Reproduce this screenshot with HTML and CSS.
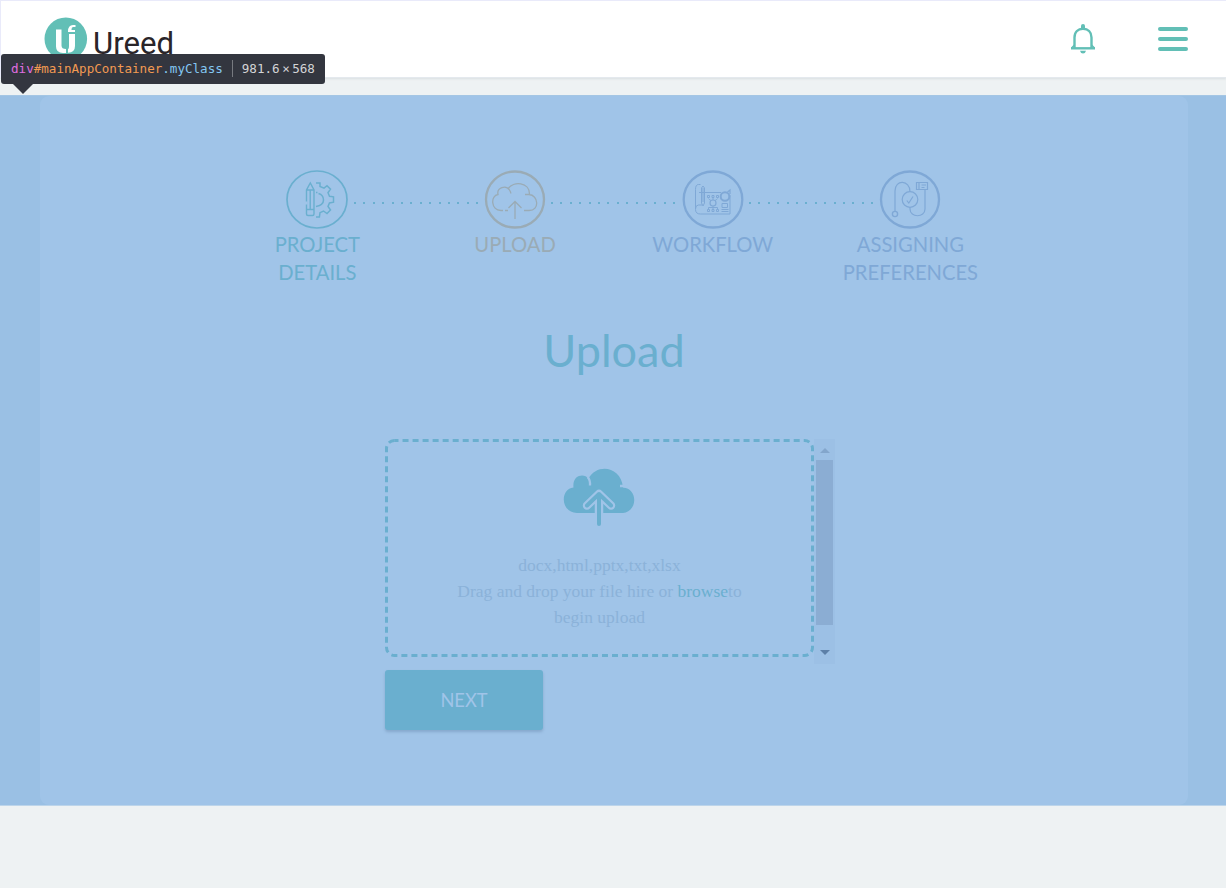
FILE: index.html
```html
<!DOCTYPE html>
<html lang="en">
<head>
<meta charset="utf-8">
<title>Ureed</title>
<link rel="stylesheet" href="styles.css">
</head>
<body>
<header class="header">
  <svg class="logo" width="140" height="48" viewBox="40 14 140 48">
    <circle cx="65.800" cy="38.800" r="21.300" fill="#62bfb6"/>
    <path d="M56 29.500h5.500v16q0 3.500 4.500 3.500v4h-3q-7 0-7-6.500z" fill="#fff"/>
    <path d="M69 34h6v12q0 6.500-7 6.800V49q1 0 1-3.500zM68 31.500q0-6.500 5-6.500h2.500v2H73q-1.500 0-1.500 2.500v.5H75v2h-7z" fill="#fff"/>
    <text class="logo-name" x="93" y="53.500" textLength="81" lengthAdjust="spacingAndGlyphs">Ureed</text>
  </svg>
  <nav class="actions">
    <svg width="26" height="32" viewBox="0 0 26 32" fill="none" stroke="#62bfb6">
      <path d="M1 25.300h24" stroke-width="2.400"/>
      <path d="M4.500 25V14.500C4.500 8.800 8 5.800 13 5.800s8.500 3 8.500 8.700V25" stroke-width="2.400"/>
      <path d="M1.500 25l3-3M24.500 25l-3-3" stroke-width="1.500"/>
      <path d="M13 3v2" stroke-width="4" stroke-linecap="round"/>
      <path d="M10 27.800h6q-.5 2.700-3 2.700t-3-2.700z" fill="#62bfb6" stroke="none"/>
    </svg>
    <div class="menu"><i></i><i></i><i></i></div>
  </nav>
</header>
<main class="main">
  <section class="card">
    <div class="steps">
      <div class="step done">
        <svg class="step-icon" width="64" height="60" viewBox="0 0 64 60">
          <ellipse cx="32" cy="29.500" rx="30" ry="28.500" stroke-width="1.700"/>
          <path d="M21.500 20v24q0 1.500 1.500 1.500h4.500q1.500 0 1.500-1.500V20l-3.700-7zM21.500 20h7.500M21.500 39.500h7.500M25.200 20v19" stroke-width="1.400"/>
          <path d="M31 13h4v3.500l4 1.700 3-2.500 3.500 3.500-2.500 3.500 1.500 3.500 4 .6v5.400l-4 .8-1.500 3.500 2.500 3.500-3.500 3.500-3.500-2.500-3.500 1.700-.6 4.300H31M31 22.500h1.500M33.500 23.500q5 1.500 5 6.500T31 36.500" stroke-width="1.500"/>
          <path d="M21 31.500v3" stroke="#a0c4e8" stroke-width="3"/>
        </svg>
        <span>PROJECT<br>DETAILS</span>
      </div>
      <div class="step current">
        <svg class="step-icon" width="64" height="60" viewBox="0 0 64 60">
          <ellipse cx="32" cy="29.500" rx="29" ry="28" stroke-width="2.300"/>
          <path d="M20 40.500h-2C7.500 40 7.500 25.500 15 24.500c-1.500-7 8-10 11.500-4.500 1 1.500 1.300 2 1.300 3.500M25 19c5-8.500 22-7 21.500 5.500M42 24.500h4c9.500.5 11 16 0 16h-5M22 40.500h3M32 49V32M25.500 38l6.500-6.500 6.500 6.500" stroke-width="1.300"/>
        </svg>
        <span>UPLOAD</span>
      </div>
      <div class="step">
        <svg class="step-icon" width="64" height="60" viewBox="0 0 64 60">
          <ellipse cx="32" cy="29.500" rx="29.300" ry="28" stroke-width="2.300"/>
          <path d="M19.500 14.500h-2q-3 0-3 5v20q0 4.500 5 4.500h29.500V25M14.500 39q0-4 3-4h3.500M20.500 18l1.500-2 1.500 2v15l-1.500 3-1.500-3zM18 22.500h22M22 18v14" stroke-width="1"/>
          <circle cx="44" cy="26.500" r="4.300" stroke-width="2"/>
          <path d="M46.500 22l2.500-2v4" stroke-width="1.200"/>
          <circle cx="32" cy="33" r="3" stroke-width="1.200"/>
          <path d="M26.500 25.500h2v2h-2zM31 25.500h2v2h-2zM35.500 25.500h2v2h-2zM26.500 39.500h2v2h-2zM31 39.500h2v2h-2zM35.500 39.500h2v2h-2zM32 28v2M32 36v3M27.500 28.500q1 1.500 2.500 2M36.500 28.500q-1 1.500-2.500 2M27.500 39v-1.500h9V39M41 33.500h5.500v4H41zM40.500 39.500h7M40.500 41.500h7" stroke-width="1"/>
        </svg>
        <span>WORKFLOW</span>
      </div>
      <div class="step">
        <svg class="step-icon" width="64" height="60" viewBox="0 0 64 60">
          <ellipse cx="32" cy="29.500" rx="29" ry="28" stroke-width="2.300"/>
          <circle cx="32" cy="29.500" r="7.800" stroke-width="1.200"/>
          <path d="M17 41V21c0-12 15-11 15 .7M32 37.300V39c0 9 15 9 15 0V20" stroke-width="1.200"/>
          <path d="M38.500 12.500h11v7h-11zM41 12.500v7M43.500 15h4.500M43.500 17.500h3" stroke-width="1.200"/>
          <circle cx="17" cy="44" r="2.600" stroke-width="1.400"/>
          <path d="M28.800 30.500l2 2.500 4.200-6.500" stroke-width="1.200"/>
        </svg>
        <span>ASSIGNING<br>PREFERENCES</span>
      </div>
    </div>
    <h1 class="title">Upload</h1>
    <div class="form">
      <div class="scroller">
        <div class="drop">
          <svg class="frame" width="429" height="218"><rect x="1.500" y="1.500" width="426" height="215" rx="8" fill="none" stroke="#6aafcf" stroke-width="3" stroke-dasharray="6 4.030" stroke-dashoffset="2"/></svg>
          <svg class="cloud" width="72" height="60" viewBox="0 0 72 60">
            <path d="M14 46C-3 45-3 22 10.500 20.500 9 8 21 6 25.500 11.500 34-4 58-1 60 20.500c15 1 15 24 0 25.500z" fill="#6aafcf"/>
            <path d="M24.500 10q3 3 2.500 8.500M67 19H57" fill="none" stroke="#a0c4e8" stroke-width="2.300"/>
            <path d="M36 57V27M24 38.500L36 27l12 11.500" fill="none" stroke="#a0c4e8" stroke-width="8.500" stroke-linecap="round" stroke-linejoin="round"/>
            <path d="M36 57V27M24 38.500L36 27l12 11.500" fill="none" stroke="#6aafcf" stroke-width="4" stroke-linecap="round" stroke-linejoin="round"/>
          </svg>
          <p class="hint">docx,html,pptx,txt,xlsx<br>Drag and drop your file hire or <a class="browse">browse</a>to<br>begin upload</p>
        </div>
        <div class="scrollbar"><i class="arrow up"></i><div class="thumb"></div><i class="arrow down"></i></div>
      </div>
      <button class="next">NEXT</button>
    </div>
  </section>
</main>
<div class="inspect"><span class="tag">div</span><span class="id">#mainAppContainer</span><span class="cls">.myClass</span><span class="size">981.6<span class="times">×</span>568</span></div>
</body>
</html>
```
FILE: styles.css
```css
* { box-sizing: border-box; }
body { margin: 0; height: 888px; background: #eef2f3; font-family: Lato, sans-serif; overflow: hidden; }
.header { display: flex; justify-content: space-between; align-items: flex-start; height: 78px; padding: 14px 38px 0 40px; background: #fff; border-top: 1px solid #e9eafa; border-left: 1px solid #e9eafa; border-bottom: 1px solid #e4e9ee; box-shadow: 0 1px 2px #d9dfe2; }
.logo { margin: -1px 0 0 -1px; }
.logo-name { font: 32px Roboto, sans-serif; fill: #2a2529; }
.actions { display: flex; gap: 62px; padding-top: 8px; }
.menu { display: flex; flex-direction: column; gap: 6px; padding-top: 4px; }
.menu i { width: 30px; height: 4px; border-radius: 2px; background: #62bfb6; }
.main { height: 711px; margin-top: 17px; padding: 0 38px 0 40px; background: #9ac0e4; border-top: 1px solid #a4c6e4; border-bottom: 1px solid #bdd5ea; }
.card { height: 709px; padding-top: 74px; border-radius: 9px; background: #a0c4e8; }
.steps { display: grid; grid-template-columns: repeat(4, 197.700px); width: 791px; margin-left: 178.500px; }
.step { position: relative; display: flex; flex-direction: column; align-items: center; height: 120px; color: #7fa8d6; font-size: 20.200px; line-height: 28px; text-align: center; }
.step-icon { fill: none; stroke: currentColor; }
.done { color: #6aafcf; }
.current { color: #9aabb5; }
.step:not(:last-child)::after { content: ""; position: absolute; left: 135px; top: 32px; width: 126px; height: 2px; background: repeating-linear-gradient(90deg, #6aafcf 0 2px, transparent 2px 9.400px); }
.title { margin: 32px 0 0; font-size: 45px; line-height: 56px; font-weight: 400; text-align: center; color: #6aafcf; }
.form { width: 450px; margin: 61px 0 0 345px; }
.scroller { display: flex; height: 225px; }
.drop { position: relative; width: 429px; height: 218px; padding-top: 28px; }
.frame { position: absolute; left: 0; top: 0; }
.cloud { display: block; margin: 0 0 0 178px; }
.hint { margin: 25px 0 0; font: 17.500px/26px "Liberation Serif", serif; text-align: center; color: #8bb2d9; }
.browse { color: #6aafcf; }
.scrollbar { display: flex; flex-direction: column; align-items: center; width: 21px; background: #9cc0e5; padding: 9px 0; }
.arrow { border: 5px solid transparent; border-top: 0; border-bottom: 5px solid #83a6cc; }
.down { border-top: 5px solid #5d80a8; border-bottom: 0; margin-top: 25px; }
.thumb { width: 17px; height: 165px; margin-top: 7px; background: #8badd3; }
.next { display: block; width: 158px; height: 60px; margin-top: 6px; border: 0; border-radius: 3px; background: #6aafcf; color: #a0c4e8; font: 18.300px Lato, sans-serif; box-shadow: 0 2px 3px #86a8cc; }
.inspect { position: absolute; left: 1px; top: 54px; width: 324px; height: 30px; padding: 0 0 2px 10px; display: flex; align-items: center; border-radius: 3px; background: #33363f; font: 12.570px "DejaVu Sans Mono", monospace; white-space: pre; }
.inspect::after { content: ""; position: absolute; left: 12px; top: 30px; border: 10px solid transparent; border-top-color: #33363f; border-bottom: 0; }
.tag { color: #e06ee0; }
.id { color: #f29a52; }
.cls { color: #84c7f2; }
.size { display: flex; align-items: center; margin-left: 9px; padding-left: 9px; height: 17px; border-left: 1px solid #777a80; color: #d3d4d6; }
.times { margin: 0 2.500px; }
```
